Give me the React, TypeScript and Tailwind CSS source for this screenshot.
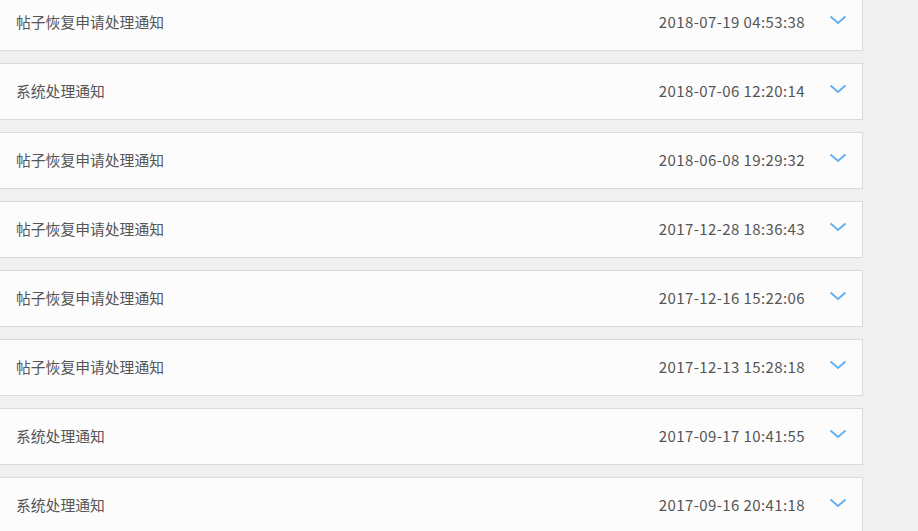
const notices = [
  { title: '帖子恢复申请处理通知', time: '2018-07-19 04:53:38' },
  { title: '系统处理通知', time: '2018-07-06 12:20:14' },
  { title: '帖子恢复申请处理通知', time: '2018-06-08 19:29:32' },
  { title: '帖子恢复申请处理通知', time: '2017-12-28 18:36:43' },
  { title: '帖子恢复申请处理通知', time: '2017-12-16 15:22:06' },
  { title: '帖子恢复申请处理通知', time: '2017-12-13 15:28:18' },
  { title: '系统处理通知', time: '2017-09-17 10:41:55' },
  { title: '系统处理通知', time: '2017-09-16 20:41:18' },
];

const Chevron = () => (
  <svg width="18" height="10" viewBox="0 0 18 10" className="flex-shrink-0">
    <path d="M1.5 1.5 L9 8 L16.5 1.5" fill="none" stroke="#64b0f0" strokeWidth="2" />
  </svg>
);

export default function App() {
  return (
    <div
      className="w-[918px] h-[531px] overflow-hidden bg-[#f0f0f0]"
      style={{ fontFamily: '"Noto Sans CJK SC", "Liberation Sans", sans-serif' }}
    >
      <div className="-mt-[6px] -ml-[2px] w-[865px] flex flex-col gap-3">
        {notices.map((n, i) => (
          <div
            key={i}
            className="h-[57px] flex items-center bg-[#fcfcfc] border border-[#dadada] pl-[17px] pr-[15px]"
          >
            <span className="text-[14.8px] text-[#555]">{n.title}</span>
            <span className="ml-auto text-[15px] tracking-[0.4px] text-[#555]">{n.time}</span>
            <div className="ml-[24px] -mt-[6px]">
              <Chevron />
            </div>
          </div>
        ))}
      </div>
    </div>
  );
}
